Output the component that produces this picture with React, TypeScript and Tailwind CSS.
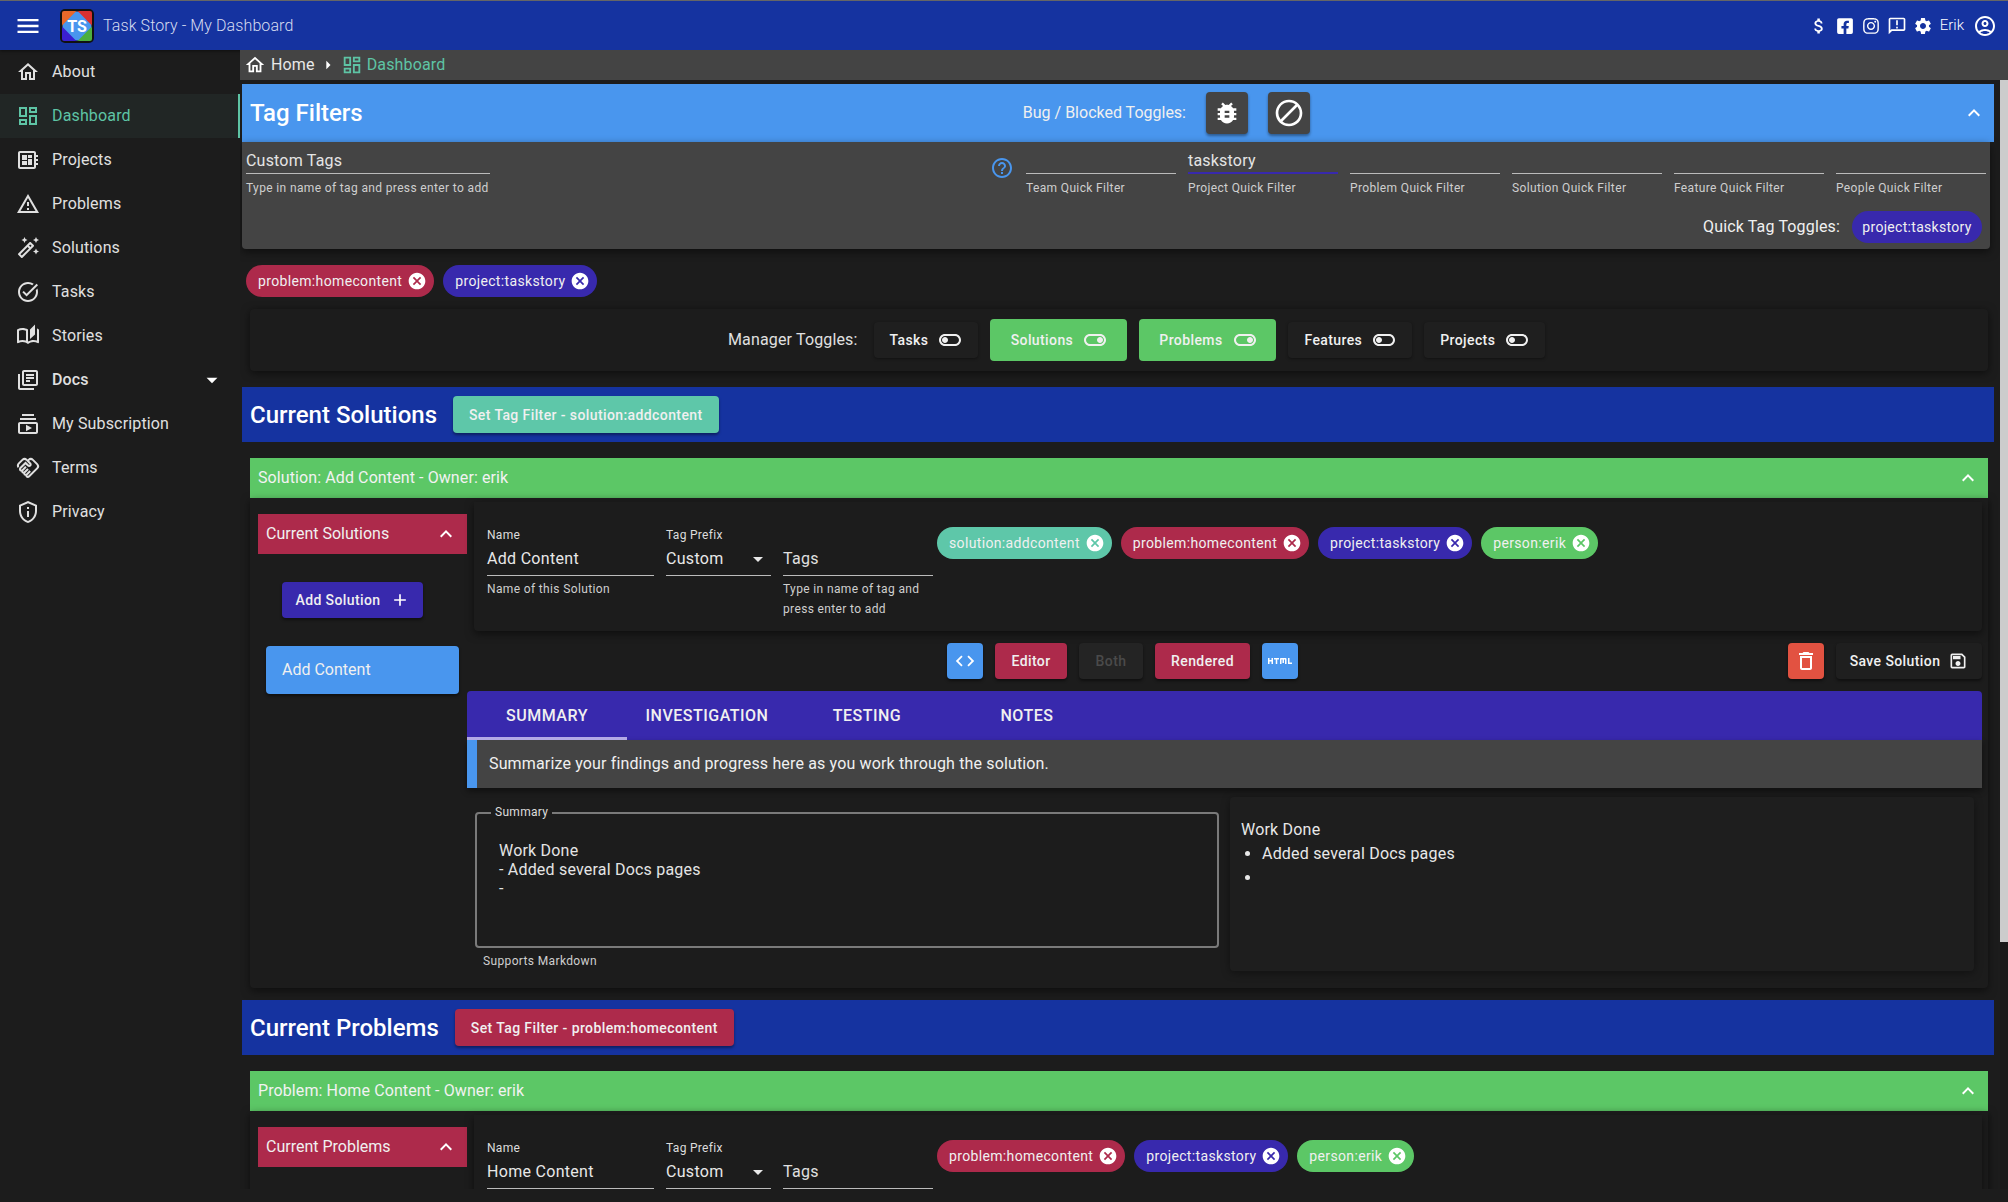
import type { ReactNode } from "react";
import { FaFacebookSquare, FaInstagram } from "react-icons/fa";
import {
  MdAdd,
  MdArrowDropDown,
  MdArrowRight,
  MdAttachMoney,
  MdBlock,
  MdBugReport,
  MdCancel,
  MdCode,
  MdExpandLess,
  MdHelpOutline,
  MdHtml,
  MdMenu,
  MdOutlineAccountCircle,
  MdOutlineAnnouncement,
  MdOutlineAutoFixHigh,
  MdOutlineAutoStories,
  MdOutlineDashboard,
  MdOutlineDelete,
  MdOutlineDeveloperBoard,
  MdOutlineHandshake,
  MdOutlineHome,
  MdOutlineLibraryBooks,
  MdOutlinePrivacyTip,
  MdOutlineSave,
  MdOutlineSubscriptions,
  MdOutlineTaskAlt,
  MdOutlineToggleOff,
  MdOutlineToggleOn,
  MdOutlineWarningAmber,
  MdSettings,
} from "react-icons/md";

const navItems = [
  { label: "About", icon: MdOutlineHome },
  { label: "Dashboard", icon: MdOutlineDashboard, active: true },
  { label: "Projects", icon: MdOutlineDeveloperBoard },
  { label: "Problems", icon: MdOutlineWarningAmber },
  { label: "Solutions", icon: MdOutlineAutoFixHigh },
  { label: "Tasks", icon: MdOutlineTaskAlt },
  { label: "Stories", icon: MdOutlineAutoStories },
  { label: "Docs", icon: MdOutlineLibraryBooks, caret: true },
  { label: "My Subscription", icon: MdOutlineSubscriptions },
  { label: "Terms", icon: MdOutlineHandshake },
  { label: "Privacy", icon: MdOutlinePrivacyTip },
];

const quickFilters = [
  { label: "Team Quick Filter" },
  { label: "Project Quick Filter", value: "taskstory", active: true },
  { label: "Problem Quick Filter" },
  { label: "Solution Quick Filter" },
  { label: "Feature Quick Filter" },
  { label: "People Quick Filter" },
];

const managerToggles = [
  { label: "Tasks", on: false },
  { label: "Solutions", on: true },
  { label: "Problems", on: true },
  { label: "Features", on: false },
  { label: "Projects", on: false },
];

function Logo() {
  return (
    <svg width="36" height="36" viewBox="0 0 36 36" className="shrink-0">
      <rect x="1" y="1" width="34" height="34" rx="5" fill="#111" />
      <rect x="3" y="3" width="15" height="15" rx="2" fill="#e8682a" />
      <rect x="18" y="3" width="15" height="15" rx="2" fill="#d8302f" />
      <rect x="3" y="18" width="15" height="15" rx="2" fill="#3b1fd0" />
      <rect x="18" y="18" width="15" height="15" rx="2" fill="#4caf3f" />
      <rect x="7" y="7" width="22" height="22" rx="3" fill="#4996ee" transform="rotate(45 18 18)" />
      <text x="18" y="23.5" textAnchor="middle" fontSize="16" fontWeight="700" fill="#fff" fontFamily="Roboto, sans-serif">
        TS
      </text>
    </svg>
  );
}

function Chip({ label, color, className = "" }: { label: string; color: string; className?: string }) {
  return (
    <div className={`flex h-8 items-center rounded-full pl-3 pr-[7px] text-sm tracking-[0.35px] text-[#f0f0f0] ${color} ${className}`}>
      <span>{label}</span>
      <MdCancel className="ml-[5px] text-white" size={20} />
    </div>
  );
}

function Field({
  label,
  helper,
  value,
  active,
  className = "",
}: {
  label?: string;
  helper?: ReactNode;
  value?: string;
  active?: boolean;
  className?: string;
}) {
  return (
    <div className={className}>
      {label && <div className="h-4 text-xs leading-4 tracking-[0.3px] text-[#ddd]">{label}</div>}
      <div className={`h-[25px] border-b leading-6 tracking-[0.2px] text-[#e4e4e4] ${active ? "border-b-2 border-[#3829ad]" : "border-[#bbb]"}`}>
        {value}
      </div>
      {helper && <div className="mt-[4px] text-xs leading-5 tracking-[0.36px] text-[#cfcfcf]">{helper}</div>}
    </div>
  );
}

function FormField({ label, value, helper, className = "" }: { label: string; value: string; helper?: string; className?: string }) {
  return (
    <div className={className}>
      <div className="h-4 text-xs leading-4 tracking-[0.3px] text-[#ddd]">{label}</div>
      <div className="mt-1 h-[29px] border-b border-[#bbb] leading-6 tracking-[0.3px] text-[#e8e8e8]">{value}</div>
      {helper && <div className="mt-[3px] text-xs leading-5 tracking-[0.36px] text-[#cfcfcf]">{helper}</div>}
    </div>
  );
}

function SmallButton({ children, className = "" }: { children: ReactNode; className?: string }) {
  return (
    <button className={`flex items-center justify-center rounded text-sm font-medium tracking-[0.4px] shadow-[0_2px_3px_rgba(0,0,0,0.45)] ${className}`}>
      {children}
    </button>
  );
}

function Section({
  title,
  buttonLabel,
  buttonColor,
  barLabel,
  listTitle,
  addLabel,
  itemLabel,
  nameValue,
  nameHelper,
  chips,
  saveLabel,
}: {
  title: string;
  buttonLabel: string;
  buttonColor: string;
  barLabel: string;
  listTitle: string;
  addLabel: string;
  itemLabel: string;
  nameValue: string;
  nameHelper: string;
  chips: { label: string; color: string }[];
  saveLabel: string;
}) {
  return (
    <section>
      <div className="ml-[2px] mr-[6px] flex h-[55px] items-center bg-[#1533a0] pl-2">
        <h2 className="text-2xl font-medium text-white">{title}</h2>
        <button className={`ml-4 h-[37px] rounded px-4 text-sm font-medium tracking-[0.4px] text-[#f0f0f0] shadow-[0_2px_3px_rgba(0,0,0,0.4)] ${buttonColor}`}>
          {buttonLabel}
        </button>
      </div>

      <div className="mx-[10px] mr-[12px] mt-4 flex h-10 items-center justify-between bg-[#5cc766] pl-2 pr-[8px] text-[#f2f2f2]">
        <span className="tracking-[0.1px]">{barLabel}</span>
        <MdExpandLess size={24} className="text-white" />
      </div>

      <div className="ml-[10px] mr-[12px] flex h-[490px] rounded-b bg-[#1c1c1c] shadow-[0_3px_8px_rgba(0,0,0,0.5)]">
        <div className="ml-2 w-[209px] shrink-0 pt-4">
          <div className="flex h-10 items-center justify-between bg-[#ad2a4b] pl-2 pr-[9px] text-[#f0f0f0]">
            <span>{listTitle}</span>
            <MdExpandLess size={24} className="text-white" />
          </div>
          <button className="ml-6 mt-7 flex h-9 w-[141px] items-center justify-center gap-[9px] rounded bg-[#3829ad] text-sm font-medium tracking-[0.4px] text-[#f0f0f0] shadow-[0_2px_3px_rgba(0,0,0,0.45)]">
            {addLabel}
            <MdAdd size={20} className="text-white" />
          </button>
          <div className="ml-2 mt-7 flex h-12 w-[193px] items-center rounded bg-[#4996ee] pl-4 text-[#f0f0f0] shadow-[0_2px_3px_rgba(0,0,0,0.45)]">
            {itemLabel}
          </div>
        </div>

        <div className="w-[1515px] shrink-0">
          <div className="ml-[7px] mt-1 flex h-[129px] rounded-b bg-[#1c1c1c] pl-[13px] pt-[25px] shadow-[0_3px_8px_rgba(0,0,0,0.5)]">
            <FormField label="Name" value={nameValue} helper={nameHelper} className="w-[167px]" />
            <div className="relative ml-3 w-[105px]">
              <FormField label="Tag Prefix" value="Custom" />
              <MdArrowDropDown size={24} className="absolute right-[1px] top-5 text-[#e8e8e8]" />
            </div>
            <div className="ml-3 w-[150px]">
              <div className="h-4" />
              <div className="mt-1 h-[29px] border-b border-[#bbb] text-base leading-6 tracking-[0.3px] text-[#e0e0e0]">Tags</div>
              <div className="mt-[3px] text-xs leading-5 tracking-[0.36px] text-[#cfcfcf]">Type in name of tag and press enter to add</div>
            </div>
            <div className="ml-1 flex gap-[9px] self-start">
              {chips.map((c) => (
                <Chip key={c.label} label={c.label} color={c.color} />
              ))}
            </div>
          </div>

          <div className="mt-3 flex h-9 items-stretch pl-[480px]">
            <SmallButton className="w-9 bg-[#4996ee] text-white">
              <MdCode size={22} />
            </SmallButton>
            <SmallButton className="ml-3 w-[72px] bg-[#ad2a4b] text-[#f0f0f0]">Editor</SmallButton>
            <SmallButton className="ml-3 w-16 bg-[#242424] text-[#4a4a4a]">Both</SmallButton>
            <SmallButton className="ml-3 w-[95px] bg-[#ad2a4b] text-[#f0f0f0]">Rendered</SmallButton>
            <SmallButton className="ml-3 w-9 bg-[#4996ee] text-white">
              <MdHtml size={24} />
            </SmallButton>
            <SmallButton className="ml-auto w-9 bg-[#e25241] text-white">
              <MdOutlineDelete size={24} />
            </SmallButton>
            <SmallButton className="ml-3 w-[146px] gap-2 bg-[#1f1f1f] text-[#f0f0f0]">
              {saveLabel}
              <MdOutlineSave size={20} />
            </SmallButton>
          </div>

          <div className="mt-3 flex h-[49px] rounded-t bg-[#3829ad] text-base font-medium uppercase tracking-[0.5px] text-[#f0f0f0]">
            <div className="flex w-40 items-center justify-center border-b-[3px] border-[#b3a9e6] pt-[3px]">Summary</div>
            <div className="flex w-40 items-center justify-center">Investigation</div>
            <div className="flex w-40 items-center justify-center">Testing</div>
            <div className="flex w-40 items-center justify-center">Notes</div>
          </div>
          <div className="flex h-[48px] items-center border-l-[10px] border-[#4996ee] bg-[#444] pl-3 tracking-[0.15px] text-[#f0f0f0] shadow-[0_3px_6px_rgba(0,0,0,0.45)]">
            Summarize your findings and progress here as you work through the solution.
          </div>

          <div className="flex">
            <div className="ml-2 mt-6 w-[744px] shrink-0">
              <div className="relative h-[136px] rounded border-2 border-[#7a7a7a] pl-[22px] pt-[27px] leading-[19px] tracking-[0.2px] text-[#e4e4e4]">
                <span className="absolute left-[14px] top-[-10px] bg-[#1c1c1c] px-1 text-xs leading-4 tracking-[0.3px] text-[#ddd]">Summary</span>
                <p>Work Done</p>
                <p>- Added several Docs pages</p>
                <p>-</p>
              </div>
              <div className="ml-2 mt-[3px] text-xs leading-5 tracking-[0.36px] text-[#cfcfcf]">Supports Markdown</div>
            </div>
            <div className="ml-[11px] mt-[9px] h-[174px] w-[744px] rounded bg-[#1e1e1e] pl-[11px] pt-[21px] leading-6 tracking-[0.2px] text-[#e8e8e8] shadow-[0_2px_8px_rgba(0,0,0,0.4)]">
              <p>Work Done</p>
              <ul className="list-disc pl-[21px]">
                <li>Added several Docs pages</li>
                <li className="h-6" />
              </ul>
            </div>
          </div>
        </div>
      </div>
    </section>
  );
}

export default function App() {
  return (
    <div className="flex h-[1202px] w-[2008px] flex-col overflow-hidden bg-[#1c1c1c] [font-family:Roboto,sans-serif] text-base text-[#e0e0e0]">
      <header className="flex h-[50px] shrink-0 items-center border-t border-[#666] bg-[#1533a0] text-white shadow-[0_1px_3px_rgba(0,0,0,0.5)]">
        <MdMenu size={28} className="ml-[14px]" />
        <div className="ml-[17px]">
          <Logo />
        </div>
        <span className="ml-2 font-light tracking-[0.1px] text-[#d5dcf0]">Task Story - My Dashboard</span>
        <div className="ml-auto mr-[11px] flex items-center">
          <MdAttachMoney size={20} />
          <FaFacebookSquare size={18} className="ml-[7px]" />
          <FaInstagram size={18} className="ml-2" />
          <MdOutlineAnnouncement size={20} className="ml-[7px]" />
          <MdSettings size={20} className="ml-[6px]" />
          <span className="ml-[7px] text-[15px] font-light">Erik</span>
          <MdOutlineAccountCircle size={24} className="ml-[9px]" />
        </div>
      </header>

      <div className="flex flex-1 overflow-hidden">
        <nav className="w-60 shrink-0">
          {navItems.map((item) => {
            const Icon = item.icon;
            return (
              <div
                key={item.label}
                className={`flex h-11 items-center pl-4 ${item.active ? "border-r-2 border-[#5ec4a5] bg-[#212625] text-[#5ec4a5]" : ""}`}
              >
                <Icon size={24} />
                <span className={`ml-3 tracking-[0.15px] ${item.caret ? "font-medium" : ""}`}>{item.label}</span>
                {item.caret && <MdArrowDropDown size={26} className="ml-auto mr-[15px] text-white" />}
              </div>
            );
          })}
        </nav>

        <main className="flex min-w-0 flex-1 flex-col">
          <div className="flex h-[30px] shrink-0 items-center bg-[#444] pl-[4px] tracking-[0.15px]">
            <MdOutlineHome size={22} className="text-white" />
            <span className="ml-[5px] text-[#e8e8e8]">Home</span>
            <MdArrowRight size={20} className="ml-[3px] text-white" />
            <MdOutlineDashboard size={22} className="ml-[3px] text-[#5ec4a5]" />
            <span className="ml-[4px] text-[#5ec4a5]">Dashboard</span>
          </div>

          <div className="flex h-[1109px] shrink-0">
            <div className="w-[1760px] shrink-0 overflow-hidden pt-1">
              <div className="ml-[2px] mr-[6px] flex h-[58px] items-center bg-[#4996ee] pl-2 pr-[8px]">
                <h1 className="text-2xl font-medium text-white">Tag Filters</h1>
                <span className="ml-auto text-[#f0f0f0]">Bug / Blocked Toggles:</span>
                <button className="ml-5 flex h-[42px] w-[42px] items-center justify-center rounded bg-[#444] text-white shadow-[0_2px_3px_rgba(0,0,0,0.4)]">
                  <MdBugReport size={28} />
                </button>
                <button className="ml-5 flex h-[42px] w-[42px] items-center justify-center rounded bg-[#444] text-white shadow-[0_2px_3px_rgba(0,0,0,0.4)]">
                  <MdBlock size={32} />
                </button>
                <div className="ml-[652px] flex w-6 justify-center">
                  <MdExpandLess size={24} className="text-white" />
                </div>
              </div>

              <div className="ml-[2px] mr-[10px] h-[107px] rounded-b bg-[#444] px-1 pt-[7px] shadow-[0_3px_8px_rgba(0,0,0,0.5)]">
                <div className="flex">
                  <Field value="Custom Tags" helper="Type in name of tag and press enter to add" className="w-[244px]" />
                  <MdHelpOutline size={24} className="ml-[500px] mt-[7px] text-[#4996ee]" />
                  <div className="ml-[12px] flex gap-3">
                    {quickFilters.map((f) => (
                      <Field key={f.label} value={f.value} helper={f.label} active={f.active} className="w-[150px]" />
                    ))}
                  </div>
                </div>
                <div className="mt-[13px] flex items-center justify-end pr-[4px]">
                  <span className="tracking-[0.15px] text-[#f0f0f0]">Quick Tag Toggles:</span>
                  <div className="ml-3 flex h-8 w-[130px] items-center justify-center rounded-full bg-[#3829ad] text-sm tracking-[0.3px] text-[#f0f0f0]">
                    project:taskstory
                  </div>
                </div>
              </div>

              <div className="ml-[6px] mt-4 flex gap-[9px]">
                <Chip label="problem:homecontent" color="bg-[#ad2a4b]" />
                <Chip label="project:taskstory" color="bg-[#3829ad]" />
              </div>

              <div className="ml-[10px] mr-[12px] mt-3 flex h-[62px] items-center rounded bg-[#1c1c1c] pl-[478px] shadow-[0_2px_8px_rgba(0,0,0,0.55)]">
                <span className="mr-4 tracking-[0.15px] text-[#e0e0e0]">Manager Toggles:</span>
                <div className="flex items-center gap-3">
                  {managerToggles.map((t) => (
                    <button
                      key={t.label}
                      className={`flex items-center justify-center gap-[10px] rounded px-4 text-sm font-medium tracking-[0.4px] text-[#f0f0f0] ${
                        t.on ? "h-[42px] w-[137px] bg-[#5cc766]" : "h-9 bg-[#1f1f1f] shadow-[0_1px_3px_rgba(0,0,0,0.4)]"
                      }`}
                    >
                      {t.label}
                      {t.on ? <MdOutlineToggleOn size={24} /> : <MdOutlineToggleOff size={24} />}
                    </button>
                  ))}
                </div>
              </div>

              <div className="mt-4">
                <Section
                  title="Current Solutions"
                  buttonLabel="Set Tag Filter - solution:addcontent"
                  buttonColor="bg-[#5ec7a9]"
                  barLabel="Solution: Add Content - Owner: erik"
                  listTitle="Current Solutions"
                  addLabel="Add Solution"
                  itemLabel="Add Content"
                  nameValue="Add Content"
                  nameHelper="Name of this Solution"
                  saveLabel="Save Solution"
                  chips={[
                    { label: "solution:addcontent", color: "bg-[#5ec7a9]" },
                    { label: "problem:homecontent", color: "bg-[#ad2a4b]" },
                    { label: "project:taskstory", color: "bg-[#3829ad]" },
                    { label: "person:erik", color: "bg-[#5cc766]" },
                  ]}
                />
              </div>
              <div className="mt-3">
                <Section
                  title="Current Problems"
                  buttonLabel="Set Tag Filter - problem:homecontent"
                  buttonColor="bg-[#ad2a4b]"
                  barLabel="Problem: Home Content - Owner: erik"
                  listTitle="Current Problems"
                  addLabel="Add Problem"
                  itemLabel="Home Content"
                  nameValue="Home Content"
                  nameHelper="Name of this Problem"
                  saveLabel="Save Problem"
                  chips={[
                    { label: "problem:homecontent", color: "bg-[#ad2a4b]" },
                    { label: "project:taskstory", color: "bg-[#3829ad]" },
                    { label: "person:erik", color: "bg-[#5cc766]" },
                  ]}
                />
              </div>
            </div>
            <div className="w-2 shrink-0 bg-[#1a1a1a]">
              <div className="h-[862px] w-full bg-[#cccccc]" />
            </div>
          </div>
        </main>
      </div>
    </div>
  );
}
